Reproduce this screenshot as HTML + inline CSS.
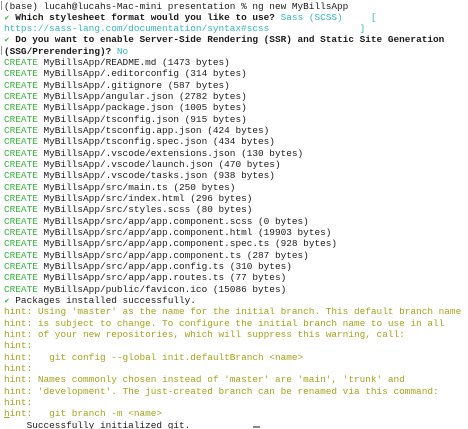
<!DOCTYPE html>
<html><head><meta charset="utf-8"><style>
html,body{margin:0;padding:0;background:#fff;width:468px;height:429px;overflow:hidden}
pre{margin:0;padding:0.5px 0 0 4px;font-family:"Liberation Mono",monospace;font-size:9.42px;line-height:11.33px;color:#1a1a1a;white-space:pre;letter-spacing:0}
.g{color:#35b83a}.c{color:#35b5c8}.h{color:#a5a41c}b{font-weight:bold}
.k{color:#35b83a;display:inline-block;width:5.65px;font-size:7px;line-height:0;font-family:"DejaVu Sans",sans-serif}
.mk{position:absolute;left:1px;width:1px;height:9px;background:#999}
.cur{position:absolute;left:253px;top:426px;width:7px;height:2px;background:#888}
</style></head><body>
<div class="mk" style="top:1px"></div><div class="mk" style="top:46px"></div>
<pre>(base) lucah@lucahs-Mac-mini presentation % ng new MyBillsApp
<span class="k">✔</span> <b>Which stylesheet format would you like to use?</b> <span class="c">Sass (SCSS)     [</span>
<span class="c">https://sass-lang.com/documentation/syntax#scss                ]</span>
<span class="k">✔</span> <b>Do you want to enable Server-Side Rendering (SSR) and Static Site Generation</b>
<b>(SSG/Prerendering)?</b> <span class="c">No</span>
<span class="g">CREATE</span> MyBillsApp/README.md (1473 bytes)
<span class="g">CREATE</span> MyBillsApp/.editorconfig (314 bytes)
<span class="g">CREATE</span> MyBillsApp/.gitignore (587 bytes)
<span class="g">CREATE</span> MyBillsApp/angular.json (2782 bytes)
<span class="g">CREATE</span> MyBillsApp/package.json (1005 bytes)
<span class="g">CREATE</span> MyBillsApp/tsconfig.json (915 bytes)
<span class="g">CREATE</span> MyBillsApp/tsconfig.app.json (424 bytes)
<span class="g">CREATE</span> MyBillsApp/tsconfig.spec.json (434 bytes)
<span class="g">CREATE</span> MyBillsApp/.vscode/extensions.json (130 bytes)
<span class="g">CREATE</span> MyBillsApp/.vscode/launch.json (470 bytes)
<span class="g">CREATE</span> MyBillsApp/.vscode/tasks.json (938 bytes)
<span class="g">CREATE</span> MyBillsApp/src/main.ts (250 bytes)
<span class="g">CREATE</span> MyBillsApp/src/index.html (296 bytes)
<span class="g">CREATE</span> MyBillsApp/src/styles.scss (80 bytes)
<span class="g">CREATE</span> MyBillsApp/src/app/app.component.scss (0 bytes)
<span class="g">CREATE</span> MyBillsApp/src/app/app.component.html (19903 bytes)
<span class="g">CREATE</span> MyBillsApp/src/app/app.component.spec.ts (928 bytes)
<span class="g">CREATE</span> MyBillsApp/src/app/app.component.ts (287 bytes)
<span class="g">CREATE</span> MyBillsApp/src/app/app.config.ts (310 bytes)
<span class="g">CREATE</span> MyBillsApp/src/app/app.routes.ts (77 bytes)
<span class="g">CREATE</span> MyBillsApp/public/favicon.ico (15086 bytes)
<span class="k">✔</span> Packages installed successfully.
<span class="h">hint: Using 'master' as the name for the initial branch. This default branch name
hint: is subject to change. To configure the initial branch name to use in all
hint: of your new repositories, which will suppress this warning, call:
hint:
hint:   git config --global init.defaultBranch &lt;name&gt;
hint:
hint: Names commonly chosen instead of 'master' are 'main', 'trunk' and
hint: 'development'. The just-created branch can be renamed via this command:
hint:
<u>h</u>int:   git branch -m &lt;name&gt;</span>
    Successfully initialized git.</pre>
<div class="cur"></div>
</body></html>
